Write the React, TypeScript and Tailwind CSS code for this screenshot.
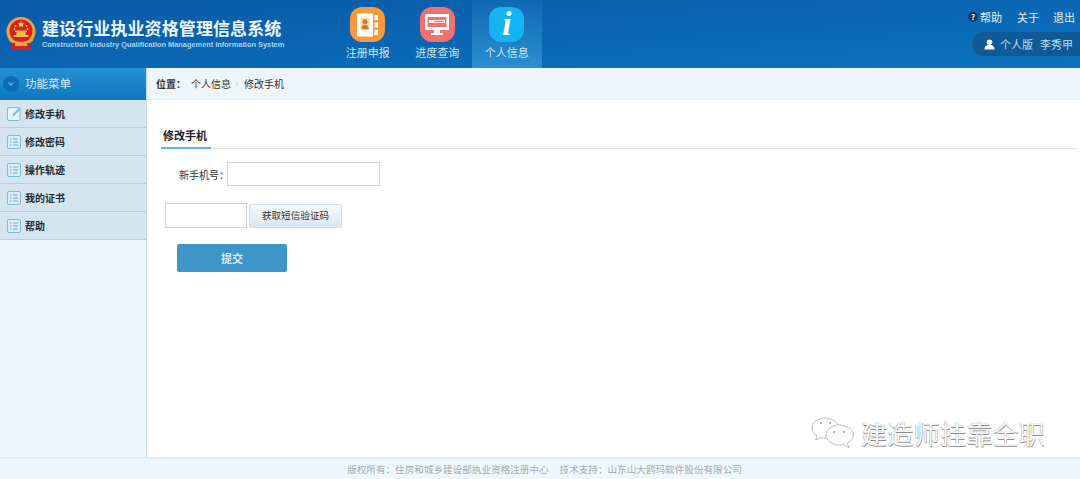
import React from "react";

const cjk = { fontFamily: '"Noto Sans CJK SC", "Liberation Sans", sans-serif' };

function ListIcon() {
  return (
    <svg width="14" height="14" viewBox="0 0 14 14" className="shrink-0">
      <rect x="0.5" y="0.5" width="13" height="13" rx="1.5" fill="#dcecf5" stroke="#7fbad7" />
      <path d="M3 4h1.5M3 7h1.5M3 10h1.5M6 4h5M6 7h5M6 10h5" stroke="#6aaed0" strokeWidth="1.2" />
    </svg>
  );
}

function EditIcon() {
  return (
    <svg width="15" height="15" viewBox="0 0 15 15" className="shrink-0">
      <rect x="0.5" y="1.5" width="12.5" height="13" rx="1.5" fill="#e8f3f8" stroke="#7fbad7" />
      <path d="M5 10.5l1-2.600L12.500 1.500l1.400 1.400L7.500 9.400z" fill="#7fbad7" />
    </svg>
  );
}

function NavItem({ label, active, children }: { label: string; active?: boolean; children: React.ReactNode }) {
  return (
    <div
      className={`flex h-[68px] w-[69.5px] flex-col items-center pt-[7px] ${
        active ? "bg-gradient-to-b from-[#0f68b2] to-[#2a8fd0]" : ""
      }`}
    >
      {children}
      <span className="mt-[2px] text-[11px] leading-[16px] text-[#cfe6f6]">{label}</span>
    </div>
  );
}

const menu = ["修改手机", "修改密码", "操作轨迹", "我的证书", "帮助"];

export default function App() {
  return (
    <div className="relative flex h-[479px] w-[1080px] flex-col overflow-hidden bg-white" style={cjk}>
      <header className="flex h-[68px] shrink-0 bg-gradient-to-br from-[#0a5aa6] via-[#0a66b3] to-[#0c74c0]">
        <div className="flex w-[333px] shrink-0 items-center pl-[6px] pb-[1px]">
          <svg width="30" height="33" viewBox="0 0 30 33" className="shrink-0">
            <circle cx="15" cy="14.500" r="14.500" fill="#e3a945" />
            <circle cx="15" cy="14" r="11.500" fill="#d9201f" />
            <path d="M15 4l1 2.300 2.500.1-2 1.500.8 2.400L15 9l-2.300 1.300.8-2.400-2-1.500 2.500-.1z" fill="#f7d34f" />
            <circle cx="9.500" cy="9" r="1" fill="#f7d34f" />
            <circle cx="20.500" cy="9" r="1" fill="#f7d34f" />
            <circle cx="8.500" cy="12" r="0.900" fill="#f7d34f" />
            <circle cx="21.500" cy="12" r="0.900" fill="#f7d34f" />
            <path d="M9 13.500h12v1.500H9zM10.500 15h9v3h-9zM7.500 18h15v2h-15z" fill="#f2c14a" />
            <path d="M4 21c4 5 18 5 22 0l1 3c-5 4-19 4-24 0z" fill="#e3a945" />
            <path d="M6.500 26h17l1.500 6.500h-20z" fill="#d9201f" />
            <path d="M9 26h12v3H9z" fill="#e3a945" />
          </svg>
          <div className="ml-[6px] flex flex-col">
            <span className="whitespace-nowrap text-[17px] font-bold leading-[22px] tracking-[0.1px] text-[#eef7fd]">
              建设行业执业资格管理信息系统
            </span>
            <span
              className="mt-[1px] whitespace-nowrap text-[7.4px] font-bold leading-[10px] text-[#a9d3ee]"
              style={{ fontFamily: '"Liberation Sans", sans-serif' }}
            >
              Construction Industry Qualification Management Information System
            </span>
          </div>
        </div>
        <nav className="flex">
          <NavItem label="注册申报">
            <div className="flex h-[35px] w-[35px] items-center justify-center rounded-[12px] bg-[#f79a3e]">
              <svg width="26" height="26" viewBox="0 0 26 26">
                <rect x="2" y="1.500" width="16" height="23" rx="1" fill="#fff" />
                <rect x="5.500" y="6" width="9" height="12" fill="#fbd2a6" />
                <circle cx="10" cy="9.800" r="2.500" fill="#d9782a" />
                <path d="M6.500 17c0-3 1.500-4.200 3.500-4.200s3.500 1.200 3.500 4.200z" fill="#d9782a" />
                <rect x="19.500" y="3" width="3.500" height="5" fill="#fff" />
                <rect x="19.500" y="10.500" width="3.500" height="5" fill="#fff" />
                <rect x="19.500" y="18" width="3.500" height="5" fill="#fff" />
              </svg>
            </div>
          </NavItem>
          <NavItem label="进度查询">
            <div className="flex h-[35px] w-[35px] items-center justify-center rounded-[12px] bg-[#f0716f]">
              <svg width="26" height="25" viewBox="0 0 26 25">
                <path d="M1 2h24v16H1z" fill="#fff" />
                <path d="M3.500 5h19v10h-19z" fill="#f0716f" />
                <path d="M5 8h16v3H5z" fill="#fff" />
                <path d="M10 8.800h10v1.400H10z" fill="#f0716f" />
                <path d="M10 18h6v3h3v2H7v-2h3z" fill="#fff" />
              </svg>
            </div>
          </NavItem>
          <NavItem label="个人信息" active>
            <div className="flex h-[35px] w-[35px] items-center justify-center rounded-[12px] bg-[#14b4f2]">
              <span
                className="text-[33px] font-bold italic leading-[35px] text-white"
                style={{ fontFamily: '"Liberation Serif", serif' }}
              >
                i
              </span>
            </div>
          </NavItem>
        </nav>
        <div className="ml-auto flex flex-col items-end pt-[9px]">
          <div className="flex items-center text-[11px] leading-[16px] text-[#e3f1fb]">
            <span className="flex h-[10px] w-[10px] items-center justify-center rounded-full bg-[#12365a] text-[8px] font-bold leading-none text-white">
              ?
            </span>
            <span className="ml-[2px]">帮助</span>
            <span className="ml-[15px]">关于</span>
            <span className="ml-[14px] mr-[5px]">退出</span>
          </div>
          <div className="mt-[7px] flex h-[24px] w-[108px] items-center rounded-l-[12px] bg-[#0f5a96] pl-[12px] text-[11px] text-[#c0dcf0]">
            <svg width="11" height="11" viewBox="0 0 12 12" className="shrink-0">
              <circle cx="6" cy="3.500" r="3" fill="#fff" />
              <path d="M0.500 11.500c0-3.500 2-4.500 3.500-5h4c1.500.5 3.500 1.500 3.500 5z" fill="#fff" />
            </svg>
            <span className="ml-[5px] whitespace-nowrap">个人版</span>
            <span className="ml-[7px] whitespace-nowrap">李秀甲</span>
          </div>
        </div>
      </header>

      <div className="flex min-h-0 flex-1">
        <aside className="flex w-[147px] shrink-0 flex-col border-r border-[#c5dcea] bg-[#eff7fc]">
          <div className="flex h-[32px] items-center bg-gradient-to-b from-[#2490d6] to-[#0f76bd] pl-[3px]">
            <span className="flex h-[16px] w-[16px] items-center justify-center rounded-full bg-[#0c6cb4]">
              <svg width="8" height="6" viewBox="0 0 8 6">
                <path d="M1.500 1.500l2.500 2.500 2.500-2.500" stroke="#5ab2e6" strokeWidth="1.300" fill="none" />
              </svg>
            </span>
            <span className="ml-[6px] text-[11.500px] text-[#d9eefb]">功能菜单</span>
          </div>
          {menu.map((m, i) => (
            <div key={m} className="flex h-[28px] items-center border-b border-[#b9cfdc] bg-[#d4e5f0] pl-[7px]">
              {i === 0 ? <EditIcon /> : <ListIcon />}
              <span className={`text-[10px] font-bold text-[#1f2a33] ${i === 0 ? "ml-[3px]" : "ml-[4px]"}`}>{m}</span>
            </div>
          ))}
        </aside>

        <main className="flex min-w-0 flex-1 flex-col">
          <div className="flex h-[32px] shrink-0 items-center border-b border-[#dfeaf1] bg-[#eef6fb] pl-[9px] text-[10px] text-[#333]">
            <span className="font-bold">位置：</span>
            <span className="ml-[5px]">个人信息</span>
            <span className="mx-[4px] w-[5px] text-[9px] text-[#b7c7d2]">›</span>
            <span>修改手机</span>
          </div>
          <div className="flex flex-1 flex-col pl-[14px] pr-[3px] pt-[26px]">
            <div className="h-[23px] border-b border-[#dcdcdc]">
              <div className="h-[23px] w-[50px] border-b-[2px] border-[#62b3e2] pl-[2px] text-[11px] font-bold leading-[18px] text-[#222]">
                修改手机
              </div>
            </div>
            <div className="mt-[13px] flex items-center pl-[18px]">
              <span className="w-[48px] whitespace-nowrap text-[10px] text-[#333]">新手机号：</span>
              <div className="h-[24px] w-[153px] border border-[#cfd3d6] bg-white" />
            </div>
            <div className="mt-[17px] flex items-center pl-[4px]">
              <div className="h-[25px] w-[82px] border border-[#cfd3d6] bg-white" />
              <div className="ml-[2px] flex h-[24px] w-[93px] items-center justify-center rounded-[2px] border border-[#d2dde5] bg-gradient-to-b from-[#f6f9fb] to-[#d9e7f1] text-[9.600px] text-[#333]">
                获取短信验证码
              </div>
            </div>
            <div className="ml-[16px] mt-[16px] flex h-[28px] w-[110px] items-center justify-center rounded-[2px] bg-[#3f94c8] text-[11px] font-bold text-[#d9eefb]">
              提交
            </div>
          </div>
        </main>
      </div>

      <footer className="flex h-[22px] shrink-0 items-center justify-center border-t-[2px] border-[#e3ebf0] bg-[#eef7fd] text-[9.600px] text-[#a3adb3]">
        <span className="ml-[9px]">版权所有：住房和城乡建设部执业资格注册中心</span>
        <span className="ml-[11px]">技术支持：山东山大鸥玛软件股份有限公司</span>
      </footer>

      <div className="absolute left-[811px] top-[417px] flex items-center">
        <svg width="44" height="32" viewBox="0 0 44 32" fill="#fff" stroke="#bdbdbd" strokeWidth="1">
          <path d="M14 1C7 1 1 5.500 1 11c0 3.500 2 6 5 8l-1.500 4 5-2.500c1.500.4 3 .6 5 .6 7 0 13-4.500 13-10S21 1 14 1z" />
          <path d="M28 8c-7 0-13 4.500-13 10s6 10 13 10c1.500 0 3-.2 4.500-.6L38 31l-1.500-5c3.500-2 6-4.500 6-8 0-5.500-7-10-14.500-10z" />
          <circle cx="23" cy="15" r="1" fill="#999" stroke="none" />
          <circle cx="33" cy="15" r="1" fill="#999" stroke="none" />
          <circle cx="10" cy="6" r="1" fill="#999" stroke="none" />
          <circle cx="19" cy="6" r="1" fill="#999" stroke="none" />
        </svg>
        <span
          className="ml-[6px] whitespace-nowrap text-[26px] leading-[30px] tracking-[0.300px] text-[#f8f8f8]"
          style={{ textShadow: "0.500px 0.500px 0.500px #8f8f8f, -0.500px -0.500px 0.500px #aaa" }}
        >
          建造师挂靠全职
        </span>
      </div>
    </div>
  );
}
